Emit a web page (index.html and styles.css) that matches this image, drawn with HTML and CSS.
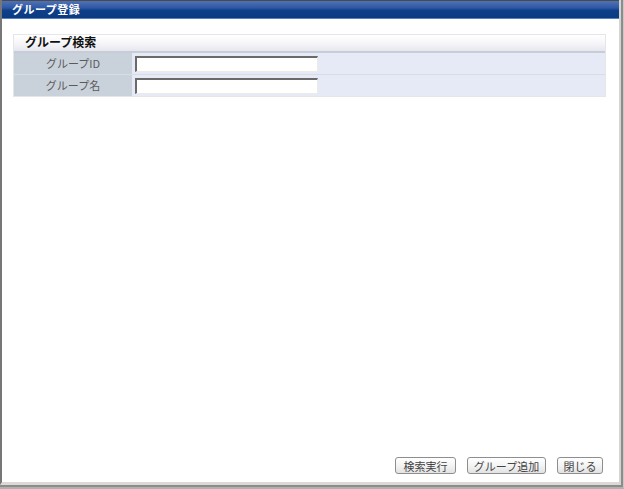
FILE: index.html
```html
<!DOCTYPE html>
<html lang="ja">
<head>
<meta charset="utf-8">
<link rel="stylesheet" href="styles.css">
</head>
<body>
<div class="window">
  <div class="frame">
    <div class="titlebar">グループ登録</div>
    <div class="content">
      <div class="section">
        <div class="section-head">グループ検索</div>
        <div class="row">
          <div class="label">グループID</div>
          <div class="value"><input class="field" type="text"></div>
        </div>
        <div class="row">
          <div class="label">グループ名</div>
          <div class="value"><input class="field" type="text"></div>
        </div>
      </div>
      <div class="buttons">
        <button class="btn btn-search">検索実行</button>
        <button class="btn btn-add">グループ追加</button>
        <button class="btn btn-close">閉じる</button>
      </div>
    </div>
  </div>
</div>
</body>
</html>
```

FILE: styles.css
```css
html, body {
  margin: 0;
  padding: 0;
  background: #ffffff;
}
body {
  font-family: "Noto Sans CJK JP", "Noto Sans", sans-serif;
}
.window {
  width: 624px;
  height: 489px;
  background: #8c8c8c;
  box-sizing: border-box;
  border-right: 1px solid #c8c8c8;
  border-bottom: 2px solid #b0b0b0;
}
.frame {
  box-sizing: border-box;
  width: 621px;
  height: 485px;
  border-left: 2px solid #777777;
  border-right: 2px solid #d6d4ce;
  border-bottom: 3px solid #dcdad4;
  background: #ffffff;
  display: flex;
  flex-direction: column;
}
.titlebar {
  height: 19px;
  box-sizing: border-box;
  border-top: 1px solid #4a4a4a;
  border-bottom: 1px solid #5a7ec0;
  background: linear-gradient(#4f72b6 0%, #2f58a4 40%, #0e3f88 55%, #0a3a82 100%);
  color: #ffffff;
  font-size: 11px;
  font-weight: bold;
  line-height: 16px;
  padding-left: 10px;
  letter-spacing: 0.5px;
}
.content {
  flex: 1;
  display: flex;
  flex-direction: column;
  padding: 15px 13px 0 11px;
}
.section {
  border: 1px solid #e4e6ea;
  background: #ffffff;
}
.section-head {
  height: 18px;
  box-sizing: border-box;
  background: linear-gradient(#ffffff 0%, #f6f6f9 50%, #e6e7ee 100%);
  border-bottom: 2px solid #c8ccd8;
  font-size: 12px;
  font-weight: bold;
  line-height: 14px;
  padding-left: 11px;
  color: #111111;
}
.row {
  display: flex;
  height: 21px;
  border-bottom: 1px solid #d8dce6;
}
.row:last-child {
  border-bottom: none;
}
.label {
  width: 118px;
  background: #c9d1da;
  color: #5a5a5a;
  font-size: 11px;
  line-height: 21px;
  text-align: center;
}
.value {
  flex: 1;
  background: #e6eaf6;
  display: flex;
  align-items: center;
  padding-left: 3px;
}
.field {
  box-sizing: border-box;
  width: 183px;
  height: 16px;
  margin: 0;
  padding: 0 2px;
  background: #ffffff;
  border-style: solid;
  border-width: 2px 1px 1px 2px;
  border-color: #6a6a6a #ecebe4 #ecebe4 #6a6a6a;
  font-size: 11px;
}
.buttons {
  margin-top: auto;
  display: flex;
  justify-content: flex-end;
  gap: 11px;
  padding-right: 3px;
  padding-bottom: 8px;
}
.btn {
  box-sizing: border-box;
  height: 17px;
  margin: 0;
  padding: 0;
  border: 1px solid #8e8e8e;
  border-radius: 3px;
  background: linear-gradient(#ffffff 0%, #f4f4f4 50%, #e2e2e2 100%);
  color: #444444;
  font-family: "Noto Sans CJK JP", "Noto Sans", sans-serif;
  font-size: 11px;
  line-height: 14px;
}
.btn-search { width: 61px; }
.btn-add { width: 79px; }
.btn-close { width: 46px; }
```
